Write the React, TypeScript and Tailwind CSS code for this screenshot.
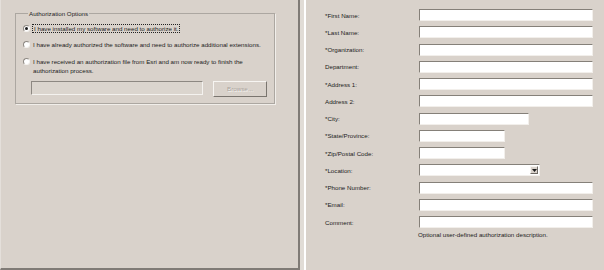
import React from 'react'

// form rows on the right: label + input width (px)
const fields: { label: string; width: number; select?: boolean }[] = [
  { label: '*First Name:', width: 174 },
  { label: '*Last Name:', width: 174 },
  { label: '*Organization:', width: 174 },
  { label: 'Department:', width: 174 },
  { label: '*Address 1:', width: 174 },
  { label: 'Address 2:', width: 174 },
  { label: '*City:', width: 110 },
  { label: '*State/Province:', width: 86 },
  { label: '*Zip/Postal Code:', width: 86 },
  { label: '*Location:', width: 121, select: true },
  { label: '*Phone Number:', width: 174 },
  { label: '*Email:', width: 174 },
  { label: 'Comment:', width: 174 },
]

const Radio = ({ checked }: { checked?: boolean }) => (
  <span className="mt-[1px] flex size-[7px] shrink-0 items-center justify-center rounded-full border border-[#8d8882] border-r-[#f4f2ef] border-b-[#f4f2ef] bg-white">
    {checked && <span className="size-[3px] rounded-full bg-[#1a1a1a]" />}
  </span>
)

const App = () => {
  return (
    <div className="flex h-[270px] w-[604px] overflow-hidden bg-[#d9d2cb] font-['Liberation_Sans',Arial,sans-serif] text-[6.2px] leading-[9px] text-[#1c1c1c]">
      {/* ----- LEFT PANEL ----- */}
      <div className="h-full w-[300px] shrink-0 border-r-2 border-b-2 border-l border-[#807b76] border-l-[#e4dfda] pt-[10px] pl-[14px]">
        <fieldset className="h-[94px] w-[260px] border border-[#aca7a1] pl-[7px] shadow-[1px_1px_0_#f1eeea]">
          <legend className="ml-[5px] px-[1px] leading-[7px]">Authorization Options</legend>
          <div className="mt-[7px] flex items-start gap-[2px]">
            <Radio checked />
            <span className="border border-dotted border-[#222] px-[1px] leading-[7px]">
              I have installed my software and need to authorize it.
            </span>
          </div>
          <div className="mt-[7px] flex items-start gap-[3px]">
            <Radio />
            <span>I have already authorized the software and need to authorize additional extensions.</span>
          </div>
          <div className="mt-[8px] flex items-start gap-[3px]">
            <Radio />
            <span className="leading-[9.4px]">
              I have received an authorization file from Esri and am now ready to finish the
              <br />
              authorization process.
            </span>
          </div>
          <div className="mt-[5px] flex items-start pl-[8px]">
            <div className="h-[14px] w-[172px] border border-[#8d8882] border-r-[#f4f2ef] border-b-[#f4f2ef] bg-[#dbd5ce]" />
            <div className="ml-[10px] flex h-[16px] w-[54px] items-center justify-center border border-[#f7f5f2] border-r-[#7a756f] border-b-[#7a756f] text-[#a9a39c] [text-shadow:1px_1px_0_#f7f5f2]">
              Browse...
            </div>
          </div>
        </fieldset>
      </div>

      {/* separator */}
      <div className="h-full w-[4px] shrink-0 bg-[#e1dcd6]" />
      <div className="h-full w-[2px] shrink-0 bg-white" />

      {/* ----- RIGHT PANEL ----- */}
      <div className="flex flex-1 flex-col gap-[5.25px] pt-[9px] pl-[19px]">
        {fields.map((f) => (
          <div key={f.label} className="flex h-[12px] items-center">
            <span className="w-[94px] shrink-0">{f.label}</span>
            <div
              className="relative h-[12px] border border-[#858079] border-r-[#f2efeb] border-b-[#f2efeb] bg-white"
              style={{ width: f.width }}
            >
              {f.select && (
                <span className="absolute top-[1px] right-[1px] flex h-[8px] w-[8px] items-center justify-center border border-[#f7f5f2] border-r-[#6f6a64] border-b-[#6f6a64] bg-[#d9d2cb]">
                  <svg width="5" height="3" viewBox="0 0 5 3">
                    <path d="M0 0h5L2.5 3z" fill="#1a1a1a" />
                  </svg>
                </span>
              )}
            </div>
          </div>
        ))}
        <div className="-mt-[3px] pl-[93px]">Optional user-defined authorization description.</div>
      </div>
    </div>
  )
}

export default App
